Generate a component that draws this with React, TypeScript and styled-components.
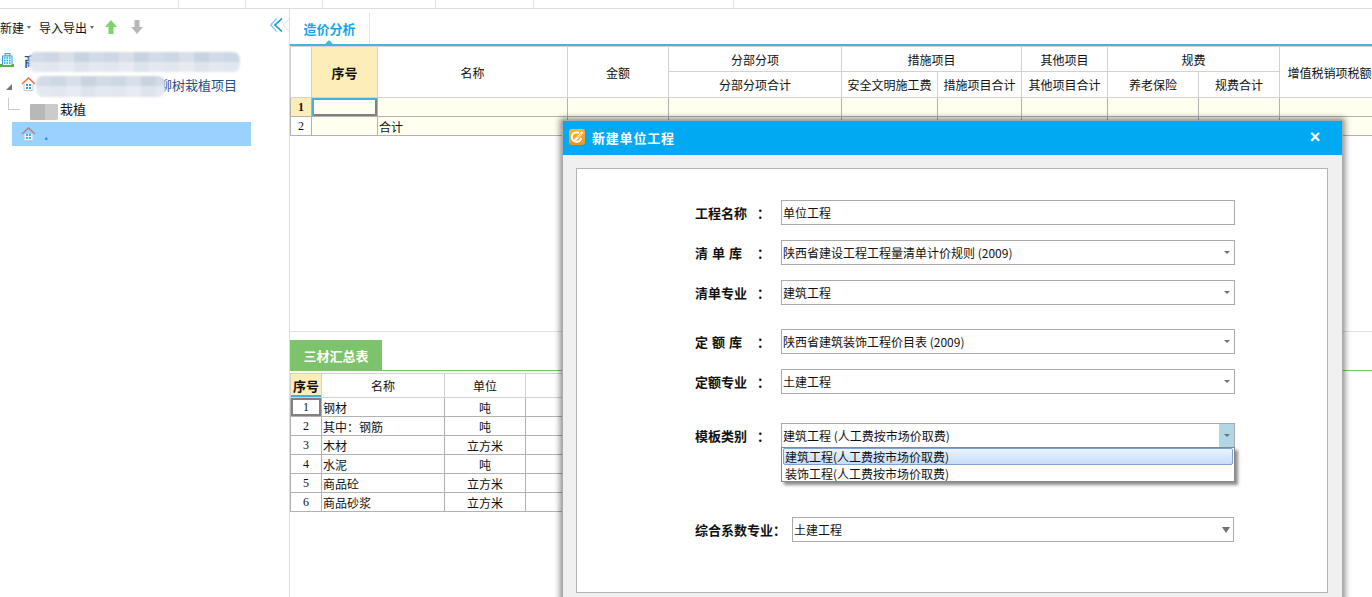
import React from 'react'
import styled, { createGlobalStyle } from 'styled-components'

const GlobalStyle = createGlobalStyle`
  html, body {
    margin: 0;
    padding: 0;
    height: 597px;
    overflow: hidden;
    background: #fff;
    font-family: "Noto Sans CJK SC", "Liberation Sans", sans-serif;
    font-size: 12px;
    color: #111;
  }
`

const BuildingIcon = () => (
  <svg width="14" height="14" viewBox="0 0 14 14">
    <rect x="5" y="0.5" width="5" height="2.5" fill="#dff1ff" stroke="#3d9fe0" />
    <rect x="2.5" y="3" width="9.5" height="9.5" fill="#e8f6ff" stroke="#3d9fe0" />
    <path d="M4 5h1.5M6.5 5H8M9 5h1.5M4 7.5h1.5M6.5 7.5H8M9 7.5h1.5M4 10h1.5M6.5 10H8M9 10h1.5" stroke="#22a0f0" strokeWidth="1.5" />
    <rect x="0" y="11" width="2.5" height="3" fill="#58b04a" />
    <rect x="12" y="11" width="2" height="3" fill="#58b04a" />
    <rect x="2.5" y="13" width="9.5" height="1" fill="#58b04a" />
  </svg>
)

const HouseIcon = ({ faded }: { faded?: boolean }) => (
  <svg width="15" height="14" viewBox="0 0 15 14" opacity={faded ? 0.75 : 1}>
    <path d="M1 7 7.5 1 14 7" fill="none" stroke={faded ? '#c0686c' : '#f07040'} strokeWidth="1.6" />
    <path d="M3 7v6.5h9V7" fill="#fff" stroke="#c8ccd4" strokeWidth="1" />
    <rect x="5" y="7" width="2" height="2" fill="#2a9ce8" />
    <rect x="8" y="7" width="2" height="2" fill="#2a9ce8" />
    <rect x="5" y="10" width="2" height="2" fill="#2a9ce8" />
    <rect x="8" y="10" width="2" height="2" fill="#2a9ce8" />
  </svg>
)

const ArrowIcon = ({ color, down }: { color: string; down?: boolean }) => (
  <svg width="12" height="14" viewBox="0 0 12 14">
    <path d={down ? 'M3.5 0h5v7H12l-6 7-6-7h3.5z' : 'M6 0l6 7H8.5v7h-5V7H0z'} fill={color} />
  </svg>
)

const CollapseIcon = () => (
  <svg width="19" height="14" viewBox="0 0 19 14">
    <path d="M6.5 0.5 0.8 7l5.7 6.5" fill="none" stroke="#45bce8" strokeWidth="1.2" strokeDasharray="1.6 0.5" />
    <path d="M12 0.5 5 7l7 6.5" fill="none" stroke="#159ad0" strokeWidth="1.6" />
    <path d="M19 0.5 13.5 7l5.5 6.5" fill="none" stroke="#dedede" strokeWidth="1" />
  </svg>
)

const AppLogo = () => (
  <svg width="16" height="16" viewBox="0 0 16 16">
    <defs>
      <linearGradient id="logoFill" x1="0" y1="0" x2="0" y2="1">
        <stop offset="0" stopColor="#fbb83a" />
        <stop offset="1" stopColor="#ef9418" />
      </linearGradient>
    </defs>
    <rect width="16" height="16" rx="3" fill="url(#logoFill)" />
    <path d="M10 3.5H7C4.5 3.5 2.8 5.5 2.8 8s2 4.8 4.7 4.8 4.2-1.6 4.6-3.8" fill="none" stroke="#fff" strokeWidth="2" />
    <path d="M5.5 10 12.5 2.5l1.8 1.6-7 7.4-2.4.6z" fill="#fff" />
    <path d="M8 9.2 12.4 4.6" stroke="#f4a62a" strokeWidth="0.8" />
  </svg>
)

const Page = styled.div`
  position: relative;
  width: 1372px;
  height: 597px;
  overflow: hidden;
`

const TopStrip = styled.div`
  height: 8px;
  border-bottom: 1px solid #dedede;
  display: flex;
`

const StripTick = styled.span<{ $w: number }>`
  box-sizing: border-box;
  width: ${p => p.$w}px;
  height: 8px;
  border-right: 1px solid #e4e4e4;
  flex: none;
`

const Columns = styled.div`
  display: flex;
  height: 588px;
`

const Sidebar = styled.aside`
  width: 289px;
  flex: none;
  border-right: 1px solid #dedede;
  position: relative;
`

const Toolbar = styled.div`
  height: 36px;
  display: flex;
  align-items: center;
`

const ToolItem = styled.span`
  font-size: 12px;
  display: flex;
  align-items: center;
  gap: 3px;
  margin-right: 8px;
  white-space: nowrap;
`

const Caret = styled.i`
  width: 0;
  height: 0;
  border-left: 2.5px solid transparent;
  border-right: 2.5px solid transparent;
  border-top: 3px solid #666a78;
`

const ToolIcon = styled.span`
  display: flex;
  margin-left: 3px;
  margin-right: 11px;
`

const CollapseButton = styled.span`
  display: flex;
  margin-left: auto;
  margin-bottom: 4px;
`

const Tree = styled.div`
  display: flex;
  flex-direction: column;
  padding-top: 5px;
`

const TreeRow = styled.div<{ $indent: number; $selected?: boolean; $blue?: boolean }>`
  position: relative;
  box-sizing: border-box;
  height: 24px;
  display: flex;
  align-items: center;
  gap: 4px;
  font-size: 13px;
  white-space: nowrap;
  margin-left: ${p => (p.$selected ? 12 : 0)}px;
  width: ${p => (p.$selected ? '239px' : 'auto')};
  padding-left: ${p => p.$indent}px;
  padding-bottom: ${p => (p.$selected ? 0 : 4)}px;
  background: ${p => (p.$selected ? '#99d1ff' : 'transparent')};
  color: ${p => (p.$blue ? '#1f4e8c' : '#111')};
`

const RootInitial = styled.span`
  margin-left: 6px;
  font-weight: 700;
`

const ProjectName = styled.span`
  margin-left: 119px;
`

const Expander = styled.i`
  position: absolute;
  left: 6px;
  top: 10px;
  width: 0;
  height: 0;
  border-bottom: 6px solid #777;
  border-left: 6px solid transparent;
`

const Connector = styled.i`
  position: absolute;
  left: 8px;
  top: 0;
  width: 11px;
  height: 11px;
  border-left: 1px solid #ccc;
  border-bottom: 1px solid #ccc;
`

const Dot = styled.span`
  margin-left: 4px;
  color: #0a8fe0;
  font-weight: 700;
`

/* the reference has these names pixelated out */
const Mosaic = styled.i<{ $left: number; $top: number; $w: number; $h: number; $gray?: boolean }>`
  position: absolute;
  left: ${p => p.$left}px;
  top: ${p => p.$top}px;
  width: ${p => p.$w}px;
  height: ${p => p.$h}px;
  border-radius: ${p => (p.$gray ? '1px' : '7px')};
  filter: blur(${p => (p.$gray ? 0.3 : 0.8)}px);
  background: ${p =>
    p.$gray
      ? 'linear-gradient(90deg, #b8b8b8 0 55%, #cbcbcb 55% 100%)'
      : `linear-gradient(180deg, rgba(255, 255, 255, 0) 0 48%, rgba(255, 255, 255, 0.4) 48% 100%),
         repeating-linear-gradient(90deg, #d3dbe6 0 15px, #cdd7e3 15px 30px, #d8dfe9 30px 45px, #c8d3df 45px 60px)`};
`

const Main = styled.main`
  flex: 1;
  min-width: 0;
  display: flex;
  flex-direction: column;
  overflow: hidden;
`

const Tabs = styled.div`
  height: 35px;
  border-bottom: 2px solid #45b4e0;
  display: flex;
  align-items: flex-end;
`

const Tab = styled.div`
  position: relative;
  width: 79px;
  height: 31px;
  border-right: 1px solid #e4e4e4;
  color: #17a5ea;
  font-size: 13px;
  font-weight: 700;
  display: flex;
  align-items: center;
  justify-content: center;
  &::after {
    content: '';
    position: absolute;
    left: 35px;
    bottom: 0;
    border-left: 4px solid transparent;
    border-right: 4px solid transparent;
    border-bottom: 4px solid #45b4e0;
  }
`

const TopPane = styled.div`
  height: 285px;
`

const Grid = styled.table<{ $w: number }>`
  border-collapse: collapse;
  table-layout: fixed;
  width: ${p => p.$w}px;
  font-size: 12px;
  & th {
    font-weight: 400;
    border: 1px solid #d2d2d2;
    background: #fff;
    padding: 0;
    white-space: nowrap;
    overflow: hidden;
  }
  & td {
    border: 1px solid #b2b2b2;
    padding: 0;
    white-space: nowrap;
    overflow: hidden;
  }
`

const HeadRow = styled.tr<{ $h: number }>`
  height: ${p => p.$h}px;
`

const BodyRow = styled.tr<{ $tint?: boolean }>`
  height: 19px;
  & > td {
    background: ${p => (p.$tint ? '#fffff0' : '#fff')};
  }
`

const SeqHead = styled.th`
  && {
    background: #fdedb8;
    font-weight: 700;
    font-size: 13px;
  }
`

const NumCell = styled.td<{ $active?: boolean }>`
  && {
    text-align: center;
    font-family: "Liberation Serif", serif;
    font-weight: ${p => (p.$active ? 700 : 400)};
    background: ${p => (p.$active ? '#fdedb8' : '#fff')};
  }
`

const SelectedCell = styled.td`
  box-shadow: inset 2px 2px 0 #45b0dc, inset -2px -2px 0 #808080;
`

const TextCell = styled.td`
  && {
    padding-left: 1px;
  }
`

const BottomPane = styled.section`
  border-top: 1px solid #e0e0e0;
  padding-top: 8px;
`

const GreenTabs = styled.div`
  height: 30px;
  border-bottom: 1px solid #7dc36b;
  margin-bottom: 2px;
`

const GreenTab = styled.div`
  width: 92px;
  height: 30px;
  background: #7dc36b;
  color: #fff;
  font-size: 13px;
  font-weight: 700;
  display: flex;
  align-items: center;
  justify-content: center;
`

const SmallSeq = styled.th`
  && {
    background: #fdedb8;
    font-weight: 700;
    font-size: 13px;
    box-shadow: inset 0 -2px 0 #45b0dc;
  }
`

const MatNum = styled.td<{ $active?: boolean }>`
  text-align: center;
  font-family: "Liberation Serif", serif;
  box-shadow: ${p => (p.$active ? 'inset 0 0 0 2px #808080' : 'none')};
`

const UnitCell = styled.td`
  text-align: center;
`

const Modal = styled.div`
  position: absolute;
  left: 562px;
  top: 120px;
  width: 779px;
  height: 490px;
  background: #f0f0f0;
  border: 1px solid #aaa;
  box-shadow: 0 0 6px 2px rgba(0, 0, 0, 0.45);
  display: flex;
  flex-direction: column;
`

const ModalTitle = styled.header`
  height: 34px;
  flex: none;
  background: #00a9f1;
  color: #fff;
  font-size: 13px;
  font-weight: 700;
  letter-spacing: 0.8px;
  display: flex;
  align-items: center;
  gap: 7px;
  padding: 0 21px 2px 6px;
  box-sizing: border-box;
`

const CloseMark = styled.span`
  margin-left: auto;
  font-family: "Liberation Sans", sans-serif;
  font-size: 18px;
  line-height: 1;
`

const Panel = styled.div`
  margin: 13px 14px 0 13px;
  box-sizing: border-box;
  height: 425px;
  flex: none;
  background: #fff;
  border: 1px solid #b4b4b4;
  padding: 31px 0 0 118px;
  display: flex;
  flex-direction: column;
`

const Row = styled.div<{ $gap: number }>`
  display: flex;
  align-items: center;
  margin-bottom: ${p => p.$gap}px;
  position: relative;
`

const Label = styled.label<{ $w?: number }>`
  width: ${p => p.$w ?? 86}px;
  flex: none;
  display: flex;
  font-size: 13px;
  font-weight: 700;
  white-space: pre;
  word-spacing: 1px;
`

const LabelName = styled.span`
  width: 62px;
`

const Field = styled.div<{ $w?: number }>`
  width: ${p => p.$w ?? 454}px;
  height: 25px;
  box-sizing: border-box;
  border: 1px solid #aaa;
  background: #fff;
  display: flex;
  align-items: center;
  padding-left: 1px;
  font-size: 12px;
  white-space: nowrap;
  position: relative;
`

const FieldArrow = styled.span<{ $open?: boolean; $big?: boolean }>`
  position: absolute;
  right: 0;
  top: 0;
  bottom: 0;
  width: 15px;
  background: ${p => (p.$open ? '#b0d8e4' : 'transparent')};
  display: flex;
  align-items: center;
  justify-content: center;
  &::after {
    content: '';
    border-left: ${p => (p.$big ? 4 : 3)}px solid transparent;
    border-right: ${p => (p.$big ? 4 : 3)}px solid transparent;
    border-top: ${p => (p.$big ? 6 : 3)}px solid #6d7080;
  }
`

const Dropdown = styled.ul`
  position: absolute;
  left: 86px;
  top: 24px;
  width: 454px;
  box-sizing: border-box;
  height: 35px;
  margin: 0;
  padding: 0 1px;
  list-style: none;
  background: #fff;
  border: 1px solid #888;
  box-shadow: 3px 3px 3px rgba(0, 0, 0, 0.45);
  z-index: 2;
`

const Option = styled.li<{ $hot?: boolean }>`
  height: 17px;
  line-height: 15px;
  box-sizing: border-box;
  padding-left: 1px;
  font-size: 12px;
  border-radius: 2px;
  border: 1px solid ${p => (p.$hot ? '#7da2ce' : 'transparent')};
  background: ${p => (p.$hot ? 'linear-gradient(#eaf3fe, #c6ddf8)' : 'transparent')};
`

const widths = [21, 66, 190, 101, 173, 96, 84, 86, 91, 81, 100]
const matWidths = [31, 123, 81, 120]

const materials: [string, string][] = [
  ['钢材', '吨'],
  ['其中：钢筋', '吨'],
  ['木材', '立方米'],
  ['水泥', '吨'],
  ['商品砼', '立方米'],
  ['商品砂浆', '立方米'],
]

const fields = [
  { label: '工程名称', value: '单位工程', gap: 15, plain: true },
  { label: '清 单 库', value: '陕西省建设工程工程量清单计价规则 (2009)', gap: 15 },
  { label: '清单专业', value: '建筑工程', gap: 24 },
  { label: '定 额 库', value: '陕西省建筑装饰工程价目表 (2009)', gap: 15 },
  { label: '定额专业', value: '土建工程', gap: 29 },
]

export default function App() {
  return (
    <Page>
      <GlobalStyle />
      <TopStrip>
        <StripTick $w={179} />
        <StripTick $w={67} />
        <StripTick $w={77} />
        <StripTick $w={113} />
        <StripTick $w={98} />
        <StripTick $w={200} />
      </TopStrip>
      <Columns>
        <Sidebar>
          <Toolbar>
            <ToolItem>新建<Caret /></ToolItem>
            <ToolItem>导入导出<Caret /></ToolItem>
            <ToolIcon><ArrowIcon color="#7ed36a" /></ToolIcon>
            <ToolIcon><ArrowIcon color="#b8b8b8" down /></ToolIcon>
            <CollapseButton><CollapseIcon /></CollapseButton>
          </Toolbar>
          <Tree>
            <TreeRow $indent={0} $blue>
              <BuildingIcon />
              <RootInitial>商</RootInitial>
              <Mosaic $left={29} $top={2} $w={211} $h={20} />
            </TreeRow>
            <TreeRow $indent={21} $blue>
              <Expander />
              <HouseIcon />
              <ProjectName>柳树栽植项目</ProjectName>
              <Mosaic $left={36} $top={2} $w={129} $h={21} />
            </TreeRow>
            <TreeRow $indent={60}>
              <Connector />
              栽植
              <Mosaic $left={30} $top={6} $w={28} $h={16} $gray />
            </TreeRow>
            <TreeRow $indent={9} $selected>
              <HouseIcon faded />
              <Dot>.</Dot>
            </TreeRow>
          </Tree>
        </Sidebar>
        <Main>
          <Tabs><Tab>造价分析</Tab></Tabs>
          <TopPane>
            <Grid $w={1089}>
              <colgroup>
                {widths.map((w, i) => <col key={i} width={w} />)}
              </colgroup>
              <thead>
                <HeadRow $h={25}>
                  <th rowSpan={2} />
                  <SeqHead rowSpan={2}>序号</SeqHead>
                  <th rowSpan={2}>名称</th>
                  <th rowSpan={2}>金额</th>
                  <th>分部分项</th>
                  <th colSpan={2}>措施项目</th>
                  <th>其他项目</th>
                  <th colSpan={2}>规费</th>
                  <th rowSpan={2}>增值税销项税额</th>
                </HeadRow>
                <HeadRow $h={26}>
                  <th>分部分项合计</th>
                  <th>安全文明施工费</th>
                  <th>措施项目合计</th>
                  <th>其他项目合计</th>
                  <th>养老保险</th>
                  <th>规费合计</th>
                </HeadRow>
              </thead>
              <tbody>
                <BodyRow $tint>
                  <NumCell $active>1</NumCell>
                  <SelectedCell />
                  {widths.slice(2).map((_, i) => <td key={i} />)}
                </BodyRow>
                <BodyRow $tint>
                  <NumCell>2</NumCell>
                  <td />
                  <TextCell>合计</TextCell>
                  {widths.slice(3).map((_, i) => <td key={i} />)}
                </BodyRow>
              </tbody>
            </Grid>
          </TopPane>
          <BottomPane>
            <GreenTabs><GreenTab>三材汇总表</GreenTab></GreenTabs>
            <Grid $w={355}>
              <colgroup>
                {matWidths.map((w, i) => <col key={i} width={w} />)}
              </colgroup>
              <thead>
                <HeadRow $h={24}>
                  <SmallSeq>序号</SmallSeq>
                  <th>名称</th>
                  <th>单位</th>
                  <th>数量</th>
                </HeadRow>
              </thead>
              <tbody>
                {materials.map(([name, unit], i) => (
                  <BodyRow key={name}>
                    <MatNum $active={i === 0}>{i + 1}</MatNum>
                    <TextCell>{name}</TextCell>
                    <UnitCell>{unit}</UnitCell>
                    <td />
                  </BodyRow>
                ))}
              </tbody>
            </Grid>
          </BottomPane>
        </Main>
      </Columns>
      <Modal>
        <ModalTitle>
          <AppLogo />
          新建单位工程
          <CloseMark>×</CloseMark>
        </ModalTitle>
        <Panel>
          {fields.map(f => (
            <Row key={f.label} $gap={f.gap}>
              <Label><LabelName>{f.label}</LabelName>：</Label>
              <Field>
                {f.value}
                {!f.plain && <FieldArrow />}
              </Field>
            </Row>
          ))}
          <Row $gap={69}>
            <Label><LabelName>模板类别</LabelName>：</Label>
            <Field>
              建筑工程 (人工费按市场价取费)
              <FieldArrow $open />
            </Field>
            <Dropdown>
              <Option $hot>建筑工程(人工费按市场价取费)</Option>
              <Option>装饰工程(人工费按市场价取费)</Option>
            </Dropdown>
          </Row>
          <Row $gap={0}>
            <Label $w={97}>综合系数专业：</Label>
            <Field $w={442}>
              土建工程
              <FieldArrow $big />
            </Field>
          </Row>
        </Panel>
      </Modal>
    </Page>
  )
}
